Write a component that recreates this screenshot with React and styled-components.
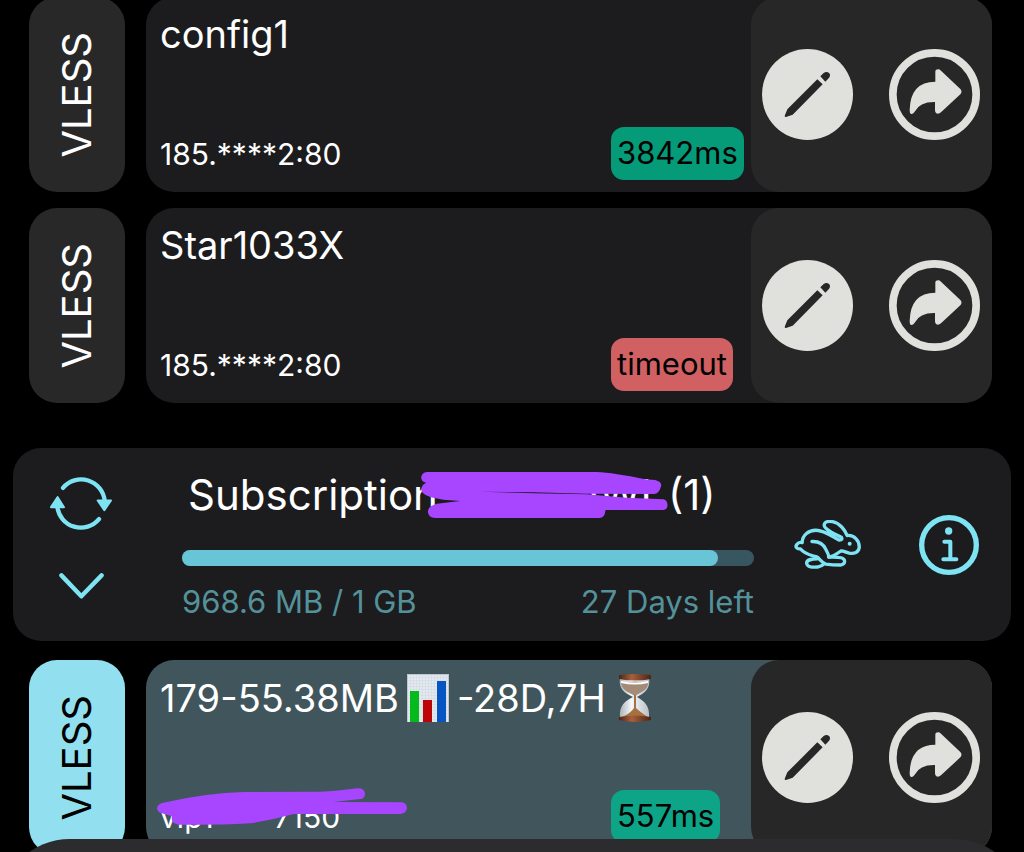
import styled, { createGlobalStyle } from "styled-components";

const GlobalStyle = createGlobalStyle`
  * {
    box-sizing: border-box;
  }
  body {
    margin: 0;
    background: #000;
    font-family: Inter, "Liberation Sans", sans-serif;
  }
  button {
    display: flex;
    padding: 0;
    border: none;
    background: none;
    color: inherit;
    cursor: pointer;
  }
  svg {
    display: block;
  }
`;

const StyledPage = styled.main`
  height: 100vh;
  overflow: hidden;
`;

const StyledList = styled.ul`
  display: flex;
  flex-direction: column;
  gap: 16px;
  margin: 0;
  padding: 0 32px 0 29px;
  list-style: none;
`;

/* the list is already scrolled a little */
const StyledScrolled = styled.div`
  margin-top: -3px;
`;

const StyledRow = styled.li`
  display: flex;
  gap: 21px;
  min-height: 195px;
`;

const StyledTag = styled.div`
  display: flex;
  align-items: center;
  justify-content: center;
  width: 96px;
  border-radius: 28px;
  background: ${(props) => (props.$active ? "#92e0ef" : "#282828")};
  color: ${(props) => (props.$active ? "#000" : "#fff")};
`;

const StyledTagText = styled.span`
  writing-mode: vertical-rl;
  transform: rotate(180deg);
  font-size: 40px;
  line-height: 48px;
`;

const StyledCard = styled.div`
  display: flex;
  flex: 1;
  border-radius: 28px;
  background: ${(props) => (props.$active ? "#41565c" : "#1c1c1e")};
`;

const StyledInfo = styled.div`
  display: flex;
  flex: 1;
  flex-direction: column;
  justify-content: space-between;
  padding: 14px 0 12px 14px;
  color: #fff;
`;

const StyledName = styled.h3`
  display: flex;
  align-items: center;
  margin: 0;
  font-size: 38px;
  font-weight: 400;
  line-height: 46px;
  white-space: pre;
`;

const StyledBottom = styled.div`
  display: grid;
  grid-template-columns: 1fr 140px;
  align-items: center;
`;

const StyledAddress = styled.span`
  position: relative;
  font-size: 30px;
  line-height: 36px;
`;

const badgeColors = {
  slow: "#059a78",
  fast: "#0da488",
  error: "#d16062",
};

const StyledBadge = styled.span`
  justify-self: start;
  padding: 8px 6px 9px;
  border-radius: 13px;
  background: ${(props) => badgeColors[props.$state]};
  color: #000;
  font-size: 31px;
  line-height: 36px;
`;

const StyledActions = styled.div`
  display: flex;
  align-items: center;
  gap: 36px;
  padding: 0 12px 0 11px;
  border-radius: 28px;
  background: #272727;
  color: #e0e1dc;
`;

const StyledSubscription = styled.section`
  display: flex;
  align-items: center;
  margin: 45px 13px 19px;
  padding: 21px 32px 21px 37px;
  border-radius: 28px;
  background: #1c1c1e;
  color: #7ee4f3;
`;

const StyledToggles = styled.div`
  display: flex;
  flex-direction: column;
  align-items: center;
  gap: 43px;
  margin-right: 70px;
  padding-bottom: 14px;
`;

const StyledUsage = styled.div`
  flex: 1;
  margin-right: 40px;
`;

const StyledSubTitle = styled.h2`
  display: flex;
  margin: 0 0 29px;
  padding-left: 6px;
  color: #fff;
  font-size: 42px;
  font-weight: 400;
  line-height: 52px;
`;

const StyledHidden = styled.span`
  position: relative;
  flex: 0 0 230px;
  padding-left: 150px;
`;

const StyledBar = styled.div`
  height: 16px;
  border-radius: 8px;
  background: #37565f;
`;

const StyledBarFill = styled.div`
  height: 100%;
  border-radius: 8px;
  background: #68c5d5;
`;

const StyledCaption = styled.div`
  display: flex;
  justify-content: space-between;
  margin-top: 18px;
  color: #54929b;
  font-size: 31px;
  line-height: 36px;
`;

const StyledTools = styled.div`
  display: flex;
  align-items: center;
  gap: 58px;
`;

const StyledMarker = styled.svg`
  position: absolute;
  left: ${(props) => props.$left}px;
  top: ${(props) => props.$top}px;
`;

const StyledSheet = styled.div`
  position: fixed;
  top: calc(100vh - 13px);
  left: 0;
  right: 0;
  height: 160px;
  border-radius: 70px 70px 0 0;
  background: #2c2c2e;
`;

const EditIcon = () => (
  <svg width="91" height="91" viewBox="0 0 273 273" aria-hidden="true">
    <circle cx="136.5" cy="136.5" r="136.5" fill="currentColor" />
    <path
      d="M166 91L182 106L92 197L72 204Q66 205 69 198L76 181ZM175 82L190 98L200 88Q207 80 202 73Q194 65 185 72Z"
      fill="#272727"
    />
  </svg>
);

const ShareIcon = () => (
  <svg width="91" height="91" viewBox="0 0 273 273" aria-hidden="true">
    <circle
      cx="136.5"
      cy="136.5"
      r="125"
      fill="none"
      stroke="currentColor"
      strokeWidth="23"
    />
    <path
      d="M139 68Q139 61 148 61Q152 61 156 65L214 120Q221 128 214 136L156 190Q149 196 142 193Q138 190 138 184V159Q92 158 77 188Q72 196 66 195Q62 194 62 183Q64 98 139 98Z"
      fill="currentColor"
    />
  </svg>
);

const RefreshIcon = () => (
  <svg width="62" height="53" viewBox="150 141 186 158" aria-hidden="true">
    <g fill="none" stroke="currentColor" strokeWidth="13" strokeLinecap="round">
      <path d="M189 173A71 71 0 0 1 314 212" />
      <path d="M297 267A71 71 0 0 1 172 230" />
    </g>
    <g
      fill="currentColor"
      stroke="currentColor"
      strokeWidth="6"
      strokeLinejoin="round"
    >
      <path d="M293 211H333L313 240Z" />
      <path d="M153 231H192L173 201Z" />
    </g>
  </svg>
);

const ChevronIcon = () => (
  <svg width="45" height="26" viewBox="177 428 133 77" aria-hidden="true">
    <path
      d="M184 435L243 497L303 435"
      fill="none"
      stroke="currentColor"
      strokeWidth="13"
      strokeLinecap="round"
      strokeLinejoin="round"
    />
  </svg>
);

const RabbitIcon = () => (
  <svg width="67" height="49" viewBox="74 122 202 148" aria-hidden="true">
    <g
      fill="none"
      stroke="currentColor"
      strokeWidth="10"
      strokeLinecap="round"
      strokeLinejoin="round"
    >
      <path d="M98 190C100 166 118 153 140 153C168 153 188 172 211 183Q222 183 217 174C196 164 166 150 165 138C165 126 178 125 190 127C212 131 228 152 234 169C256 166 271 185 271 203C271 221 254 224 241 222C231 220 224 215 217 215C206 220 200 230 180 234" />
      <path d="M98 190C83 188 76 202 83 207Q88 210 93 209C108 228 130 229 144 234C152 240 158 252 170 255C184 257 200 258 214 258C230 256 231 240 216 236C204 233 192 234 178 234C180 226 173 218 170 211C164 197 150 186 128 187" />
      <path d="M144 239C126 240 112 241 112 252C113 265 132 265 145 264C156 262 162 258 166 254" />
    </g>
    <circle cx="242" cy="194" r="6" fill="currentColor" />
  </svg>
);

const InfoIcon = () => (
  <svg width="60" height="60" viewBox="449 104 180 180" aria-hidden="true">
    <g
      fill="none"
      stroke="currentColor"
      strokeLinecap="round"
      strokeLinejoin="round"
    >
      <circle cx="539" cy="194" r="82" strokeWidth="16" />
      <path d="M525 184H543V237M522 237H561" strokeWidth="12" />
    </g>
    <circle cx="538" cy="152" r="11" fill="currentColor" />
  </svg>
);

const ChartEmoji = () => (
  <svg
    width="58"
    height="48"
    viewBox="-8 0 58 48"
    role="img"
    aria-label="bar chart"
  >
    <defs>
      <pattern id="grid" width="3" height="3" patternUnits="userSpaceOnUse">
        <path d="M0 0H3M0 0V3" stroke="#c3cbd6" strokeWidth="0.6" />
      </pattern>
    </defs>
    <rect width="42" height="48" fill="#e2e8f0" />
    <rect width="42" height="48" fill="url(#grid)" />
    <path d="M0.5 48V0.5H41.5V48" fill="none" stroke="#bcc5d0" />
    <rect x="3" y="17" width="9" height="31" fill="#06b91d" />
    <rect x="16" y="26" width="9" height="22" fill="#bd0509" />
    <rect x="30" y="7" width="9" height="41" fill="#0755c2" />
  </svg>
);

const HourglassEmoji = () => (
  <svg
    width="46"
    height="48"
    viewBox="-12 0 46 48"
    role="img"
    aria-label="hourglass"
  >
    <defs>
      <linearGradient id="wood">
        <stop offset="0" stopColor="#4b2415" />
        <stop offset="0.4" stopColor="#a8603c" />
        <stop offset="1" stopColor="#4b2415" />
      </linearGradient>
      <linearGradient id="glass">
        <stop offset="0" stopColor="#a9b2b8" />
        <stop offset="0.4" stopColor="#f5f7fa" />
        <stop offset="1" stopColor="#b9c0c6" />
      </linearGradient>
    </defs>
    <path
      d="M2 4H31C33 15 26 19 19 23C26 27 32 31 31 44H2C1 31 7 27 15 23C7 19 0 15 2 4Z"
      fill="url(#glass)"
    />
    <path d="M3 9Q17 6 30 9C30 16 23 18 17 22C10 18 4 16 3 9Z" fill="#a48b77" />
    <path d="M3 7Q17 10 30 7L30 9Q17 12 3 9Z" fill="#fff" />
    <path d="M16 21H18L18 34Q22 38 30 43H4Q13 39 16 34Z" fill="#a6703f" />
    <path d="M1 1Q17 -1 33 1V5Q17 8 1 5Z" fill="url(#wood)" />
    <path d="M1 43Q17 40 33 43V46Q17 50 1 46Z" fill="url(#wood)" />
  </svg>
);

const TitleMarker = () => (
  <StyledMarker
    $left={-17}
    $top={3}
    width="247"
    height="46"
    viewBox="63 66 740 138"
    aria-hidden="true"
  >
    <path
      d="M80 66H590Q640 68 735 88L765 90Q785 95 783 108Q776 132 762 132L560 131L400 127L240 125L400 130L560 133L680 143L790 148Q802 152 802 165Q802 178 790 180H616Q614 204 598 204H105Q84 202 83 185Q84 168 110 161L180 153L130 149Q66 140 63 120Q64 104 78 98Q63 96 63 82Q66 67 80 66Z"
      fill="#a845ff"
    />
  </StyledMarker>
);

const AddressMarker = () => (
  <StyledMarker
    $left={-3}
    $top={-11}
    width="250"
    height="37"
    viewBox="470 445 750 111"
    aria-hidden="true"
  >
    <path
      d="M470 505Q472 490 500 487Q620 460 730 457L960 456Q1010 455 1070 446Q1092 445 1094 462Q1093 477 1080 478L1000 487L1205 488Q1220 492 1220 505Q1218 521 1200 523H880Q820 540 750 551Q700 556 535 555Q510 550 515 530L485 521Q470 517 470 505Z"
      fill="#a845ff"
    />
  </StyledMarker>
);

const ConfigRow = ({ name, address, ping, state, active }) => {
  return (
    <StyledRow>
      <StyledTag $active={active}>
        <StyledTagText>VLESS</StyledTagText>
      </StyledTag>
      <StyledCard $active={active}>
        <StyledInfo>
          <StyledName>{name}</StyledName>
          <StyledBottom>
            <StyledAddress>{address}</StyledAddress>
            <StyledBadge $state={state}>{ping}</StyledBadge>
          </StyledBottom>
        </StyledInfo>
        <StyledActions>
          <button type="button" aria-label="Edit">
            <EditIcon />
          </button>
          <button type="button" aria-label="Share">
            <ShareIcon />
          </button>
        </StyledActions>
      </StyledCard>
    </StyledRow>
  );
};

const configs = [
  { name: "config1", address: "185.****2:80", ping: "3842ms", state: "slow" },
  { name: "Star1033X", address: "185.****2:80", ping: "timeout", state: "error" },
];

const App = () => {
  const used = 968.6;
  const total = 1034;

  return (
    <StyledPage>
      <GlobalStyle />
      <StyledScrolled>
        <StyledList>
          {configs.map((e) => (
            <ConfigRow key={e.name} {...e} />
          ))}
        </StyledList>

        <StyledSubscription>
          <StyledToggles>
            <button type="button" aria-label="Refresh">
              <RefreshIcon />
            </button>
            <button type="button" aria-label="Collapse">
              <ChevronIcon />
            </button>
          </StyledToggles>
          <StyledUsage>
            <StyledSubTitle>
              Subscription
              <StyledHidden>
                IWI
                <TitleMarker />
              </StyledHidden>
              (1)
            </StyledSubTitle>
            <StyledBar>
              <StyledBarFill style={{ width: `${(used / total) * 100}%` }} />
            </StyledBar>
            <StyledCaption>
              <span>968.6 MB / 1 GB</span>
              <span>27 Days left</span>
            </StyledCaption>
          </StyledUsage>
          <StyledTools>
            <button type="button" aria-label="Speed test">
              <RabbitIcon />
            </button>
            <button type="button" aria-label="Info">
              <InfoIcon />
            </button>
          </StyledTools>
        </StyledSubscription>

        <StyledList>
          <ConfigRow
            name={
              <>
                179-55.38MB
                <ChartEmoji />
                -28D,7H
                <HourglassEmoji />
              </>
            }
            address={
              <>
                vip1****7150
                <AddressMarker />
              </>
            }
            ping="557ms"
            state="fast"
            active
          />
        </StyledList>
      </StyledScrolled>
      <StyledSheet />
    </StyledPage>
  );
};

export default App;
